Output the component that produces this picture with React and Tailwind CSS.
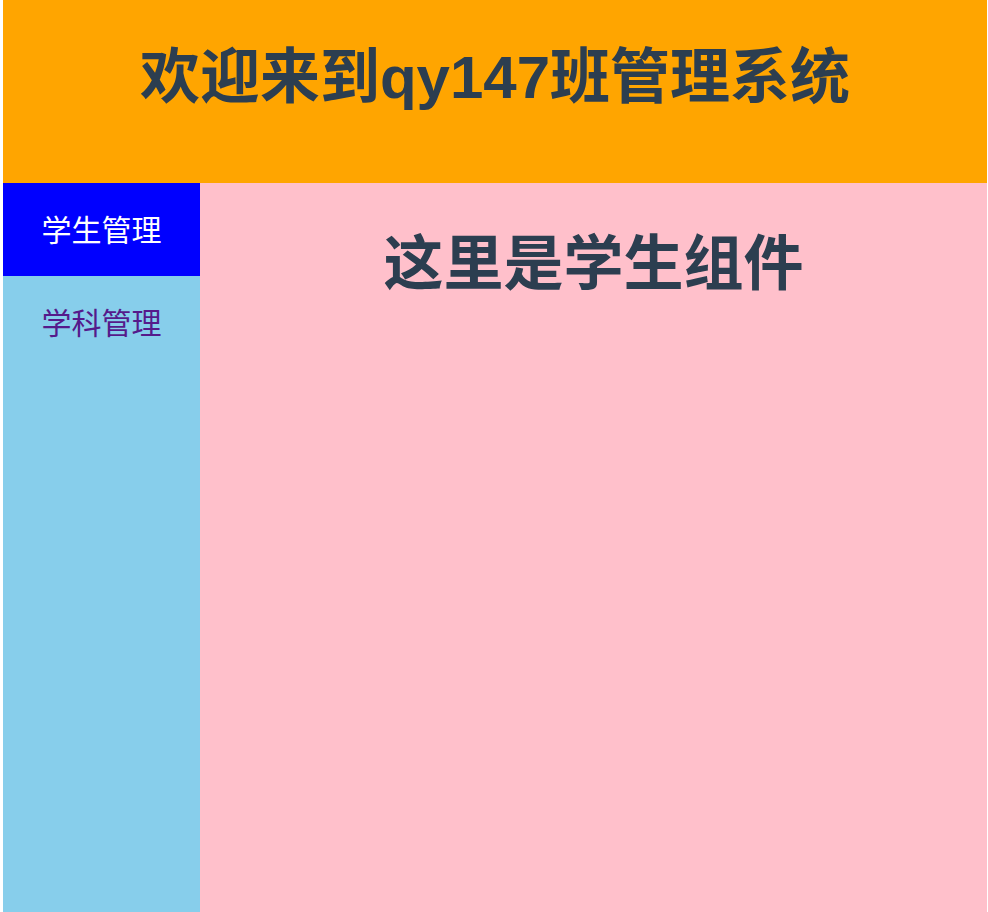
import { useState } from 'react';

const MENU = [
  { key: 'student', label: '学生管理' },
  { key: 'subject', label: '学科管理' }
];

export default function App() {
  const [active, setActive] = useState('student');

  return (
    <div className="h-[912px] pl-[3px] pr-[1px] flex flex-col bg-white font-['Liberation_Sans','Noto_Sans_CJK_SC',sans-serif]">
      {/* Header */}
      <header className="h-[183px] shrink-0 bg-[#ffa500] pt-[48px]">
        <h1 className="text-center text-[60px] leading-none font-bold text-[#2c3e50]">
          欢迎来到qy147班管理系统
        </h1>
      </header>

      <div className="flex flex-1 min-h-0">
        {/* Sidebar */}
        <nav className="w-[197px] shrink-0 bg-[#87ceeb]">
          {MENU.map(item => (
            <a
              key={item.key}
              href="#"
              onClick={(e) => { e.preventDefault(); setActive(item.key); }}
              className={`h-[93px] flex items-center justify-center pt-[2px] text-[30px] no-underline ${
                active === item.key ? 'bg-[#0000ff] text-white' : 'text-[#551a8b]'
              }`}
            >
              {item.label}
            </a>
          ))}
        </nav>

        {/* Content */}
        <main className="flex-1 bg-[#ffc0cb] pt-[52px]">
          <h2 className="text-center text-[60px] leading-none font-bold text-[#2c3e50]">
            这里是学生组件
          </h2>
        </main>
      </div>
    </div>
  );
}
